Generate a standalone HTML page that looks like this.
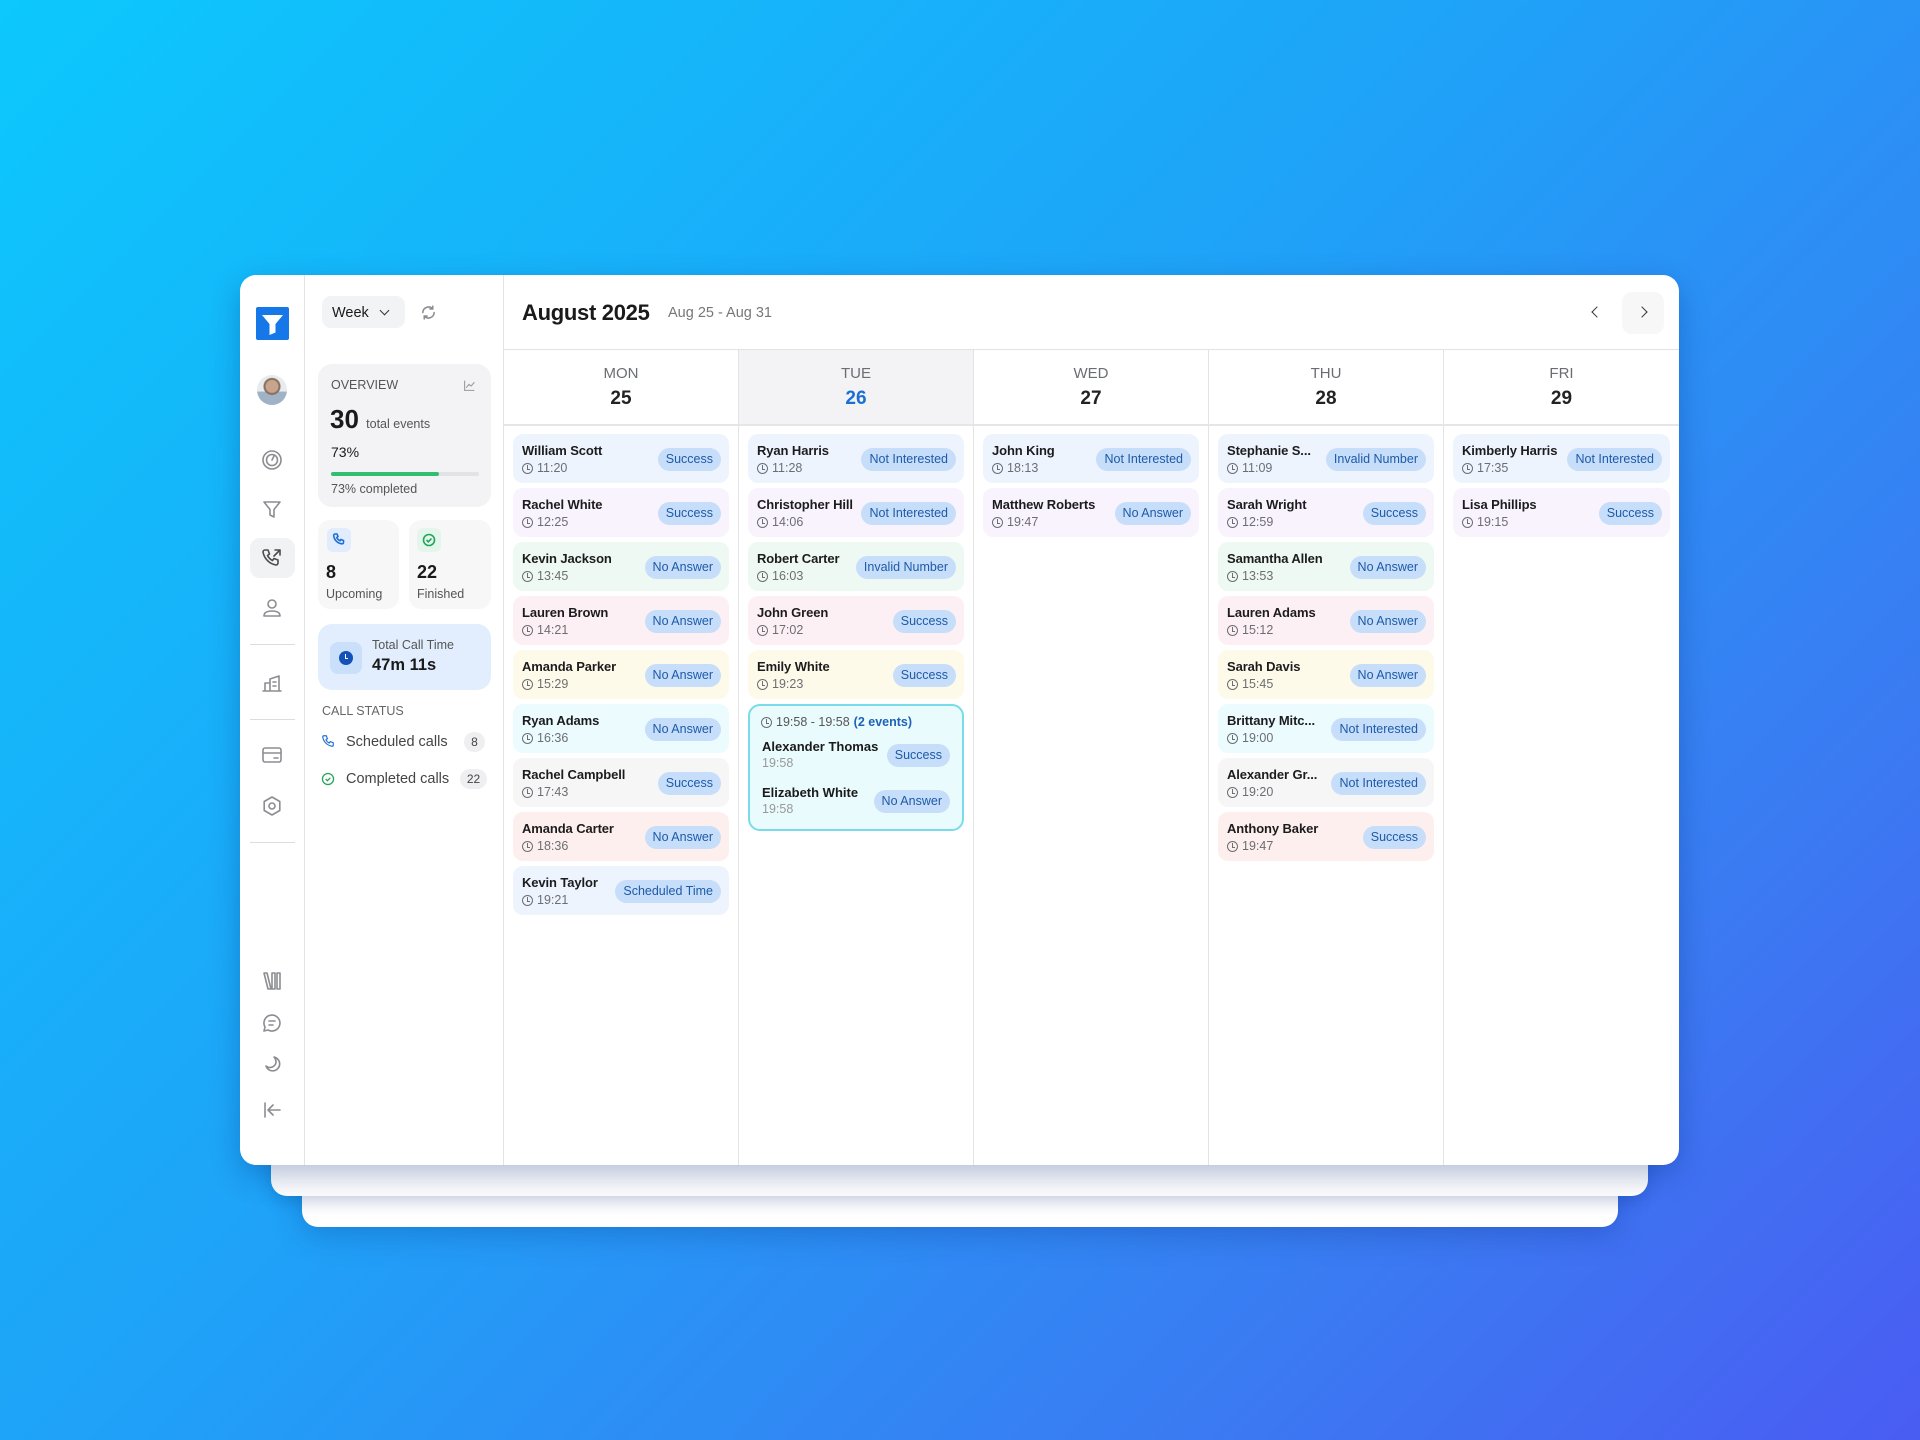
<!DOCTYPE html>
<html><head><meta charset="utf-8"><style>
*{box-sizing:border-box;margin:0;padding:0}
body{width:1920px;height:1440px;overflow:hidden;font-family:"Liberation Sans",sans-serif;background:linear-gradient(135deg,#0cc8fc 0%,#1fa2f8 45%,#3c78f2 80%,#4a5cf3 100%);position:relative;color:#1a1a1a}
.l3{position:absolute;left:302px;top:1150px;width:1316px;height:77px;background:#fff;border-radius:16px;box-shadow:0 8px 30px rgba(0,40,120,.25)}
.l2{position:absolute;left:271px;top:1130px;width:1377px;height:66px;background:#fff;border-radius:16px;box-shadow:0 6px 16px rgba(0,40,120,.2)}
.main{position:absolute;left:240px;top:275px;width:1439px;height:890px;background:#fff;border-radius:16px;box-shadow:0 10px 30px rgba(0,40,120,.3);overflow:hidden}
.a{position:absolute}
.rail{left:0;top:0;width:65px;height:890px;border-right:1px solid #e3e3e6}
.ic{position:absolute;left:20px;width:24px;height:24px}
.ic svg{width:24px;height:24px;fill:none;stroke:#8b8d93;stroke-width:1.6;stroke-linecap:round;stroke-linejoin:round}
.div{position:absolute;left:10px;width:45px;height:1px;background:#dcdde0}
.panel{left:65px;top:0;width:199px;height:890px;border-right:1px solid #e3e3e6}
.hdr{left:264px;top:0;width:1175px;height:75px;border-bottom:1px solid #e3e3e6}
.col{position:absolute;top:75px;width:235px;height:815px;border-right:1px solid #e3e3e6}
.dh{height:76px;border-bottom:2px solid #e6e6e9;text-align:center}
.dh .d{padding-top:15px;font-size:15px;color:#6b6d72}
.dh .n{margin-top:6px;font-size:19px;font-weight:bold;color:#222}
.cards{padding:8px 9px 0 9px}
.c{height:49px;margin-bottom:5px;border-radius:10px;position:relative;padding:9px 0 0 9px}
.c .nm{font-size:13px;font-weight:bold;color:#1c1c1e;white-space:nowrap;letter-spacing:-.1px}
.c .t{font-size:12.5px;color:#6c6e73;margin-top:3px;display:flex;align-items:center;gap:4px}
.clk{width:11px;height:11px;border:1.3px solid #6c6e73;border-radius:50%;position:relative;display:inline-block}
.clk:after{content:"";position:absolute;left:4px;top:1.5px;width:2px;height:3.5px;border-left:1.2px solid #6c6e73;border-bottom:1.2px solid #6c6e73}
.b{position:absolute;right:8px;top:14px;height:23px;line-height:23px;padding:0 8px;border-radius:12px;background:#c6defa;color:#1e5aa8;font-size:12.5px}
.bl{background:#eef4fe}.pu{background:#f8f3fd}.gr{background:#edf9f2}.pk{background:#fdf0f5}.ye{background:#fefae9}.cy{background:#ebfbfe}.gy{background:#f6f6f7}.rd{background:#fdefee}
</style></head><body>
<div class="l3"></div><div class="l2"></div>
<div class="main">
 <div class="a rail">
  <div class="a" style="left:16px;top:32px;width:33px;height:33px;background:#1677e8;border-radius:2px"><svg width="33" height="33" viewBox="0 0 33 33"><path d="M6 8h21l-7.5 9v8.5l-6 2.5v-11z" fill="#fff"/></svg></div>
  <div class="a" style="left:17px;top:100px;width:30px;height:30px;border-radius:50%;background:radial-gradient(circle at 50% 38%,#c9a48c 0 6px,#8a6d5d 7px 8px,transparent 9px),linear-gradient(#e8ecef 55%,#9fb2c6 56%)"></div>
  <div class="ic" style="top:173px"><svg viewBox="0 0 24 24"><circle cx="12" cy="12" r="9"/><circle cx="12" cy="12" r="5.5"/><path d="M12 12l2-4"/></svg></div>
  <div class="ic" style="top:222px"><svg viewBox="0 0 24 24"><path d="M4 5h16l-6 7.5V20l-4-2v-5.5z"/></svg></div>
  <div class="a" style="left:10px;top:263px;width:45px;height:40px;background:#f1f2f4;border-radius:10px"></div>
  <div class="ic" style="top:271px"><svg viewBox="0 0 24 24" style="stroke:#4a4c52"><path d="M5 4h3l1.5 4-2 1.5a11 11 0 0 0 5 5l1.5-2 4 1.5v3a2 2 0 0 1-2 2A16 16 0 0 1 3 6a2 2 0 0 1 2-2z"/><path d="M14 10l6-6M15 4h5v5"/></svg></div>
  <div class="ic" style="top:321px"><svg viewBox="0 0 24 24"><circle cx="12" cy="8" r="4"/><path d="M4 20c0-4 4-5 8-5s8 1 8 5z"/></svg></div>
  <div class="div" style="top:369px"></div>
  <div class="ic" style="top:396px"><svg viewBox="0 0 24 24"><path d="M3 20h18M5 20v-8h5v8M10 20V8l9-3v15M13 11h3M13 15h3"/></svg></div>
  <div class="div" style="top:444px"></div>
  <div class="ic" style="top:468px"><svg viewBox="0 0 24 24"><rect x="3" y="5" width="18" height="14" rx="2"/><path d="M3 10h18M14 15h4"/></svg></div>
  <div class="ic" style="top:519px"><svg viewBox="0 0 24 24"><circle cx="12" cy="12" r="3"/><path d="M12 3l7.8 4.5v9L12 21l-7.8-4.5v-9z"/></svg></div>
  <div class="div" style="top:567px"></div>
  <div class="ic" style="top:694px"><svg viewBox="0 0 24 24"><path d="M4 4l4 16h3L7 4zM12 4v16h3V4zM17 4v16h3V4z"/></svg></div>
  <div class="ic" style="top:736px"><svg viewBox="0 0 24 24"><path d="M4 20l1-4a8 8 0 1 1 3 3z"/><path d="M9 10h6M9 14h4"/></svg></div>
  <div class="ic" style="top:777px"><svg viewBox="0 0 24 24"><path d="M14 5a7 7 0 1 1-8 9 6 6 0 0 0 8-9z"/></svg></div>
  <div class="ic" style="top:823px"><svg viewBox="0 0 24 24"><path d="M5 5v14M20 12H9M13 7l-5 5 5 5"/></svg></div>
 </div>
 <div class="a panel">
  <div class="a" style="left:17px;top:21px;width:83px;height:32px;background:#f2f3f5;border-radius:9px;font-size:14.5px;padding:9px 0 0 10px">Week <span style="display:inline-block;width:7px;height:7px;border-right:1.5px solid #333;border-bottom:1.5px solid #333;transform:rotate(45deg);margin:0 0 3px 8px"></span></div>
  <svg class="a" style="left:115px;top:29px" width="17" height="17" viewBox="0 0 24 24" fill="none" stroke="#8b8d93" stroke-width="2.2" stroke-linecap="round"><path d="M20 12a8 8 0 0 1-14 5M4 12a8 8 0 0 1 14-5M18 3v4h-4M6 21v-4h4"/></svg>
  <div class="a" style="left:13px;top:89px;width:173px;height:143px;background:#f3f3f5;border-radius:14px">
   <div class="a" style="left:13px;top:14px;font-size:12.5px;color:#555">OVERVIEW</div>
   <svg class="a" style="left:145px;top:15px" width="13" height="13" viewBox="0 0 24 24" fill="none" stroke="#999" stroke-width="2"><path d="M3 3v18h18M6 16l5-6 4 3 6-7"/></svg>
   <div class="a" style="left:12px;top:40px;font-size:26px;font-weight:bold">30 <span style="font-size:12.5px;font-weight:normal;color:#555">total events</span></div>
   <div class="a" style="left:13px;top:80px;font-size:14px">73%</div>
   <div class="a" style="left:13px;top:108px;width:148px;height:4px;background:#e3e3e6;border-radius:2px"><div style="width:73%;height:4px;background:#2fbf6f;border-radius:2px"></div></div>
   <div class="a" style="left:13px;top:118px;font-size:12.5px;color:#555">73% completed</div>
  </div>
  <div class="a" style="left:13px;top:245px;width:81px;height:89px;background:#f7f7f8;border-radius:12px">
   <div class="a" style="left:9px;top:8px;width:24px;height:24px;background:#e1edfd;border-radius:6px"><svg width="24" height="24" viewBox="0 0 24 24" fill="none" stroke="#1e6fd9" stroke-width="1.6"><path d="M8 6h2l1 2.5-1.3 1a7 7 0 0 0 3.3 3.3l1-1.3 2.5 1v2a1.3 1.3 0 0 1-1.3 1.3A9 9 0 0 1 6.7 7.3 1.3 1.3 0 0 1 8 6z"/></svg></div>
   <div class="a" style="left:8px;top:42px;font-size:18px;font-weight:bold">8</div>
   <div class="a" style="left:8px;top:67px;font-size:12.5px;color:#555">Upcoming</div>
  </div>
  <div class="a" style="left:104px;top:245px;width:82px;height:89px;background:#f7f7f8;border-radius:12px">
   <div class="a" style="left:8px;top:8px;width:24px;height:24px;background:#e4f6ec;border-radius:6px"><svg width="24" height="24" viewBox="0 0 24 24" fill="none" stroke="#22a55a" stroke-width="1.6"><circle cx="12" cy="12" r="5.5"/><path d="M9.5 12l1.8 1.8 3.2-3.3"/></svg></div>
   <div class="a" style="left:8px;top:42px;font-size:18px;font-weight:bold">22</div>
   <div class="a" style="left:8px;top:67px;font-size:12.5px;color:#555">Finished</div>
  </div>
  <div class="a" style="left:13px;top:349px;width:173px;height:66px;background:#e2eefd;border-radius:14px">
   <div class="a" style="left:12px;top:18px;width:32px;height:32px;background:#c9dffa;border-radius:8px"><div style="margin:9px;width:14px;height:14px;border-radius:50%;background:#1552b8;position:relative"><div style="position:absolute;left:6px;top:3px;width:3px;height:5px;border-left:1.5px solid #fff;border-bottom:1.5px solid #fff"></div></div></div>
   <div class="a" style="left:54px;top:14px;font-size:12.5px;color:#555">Total Call Time</div>
   <div class="a" style="left:54px;top:32px;font-size:16.5px;font-weight:bold">47m 11s</div>
  </div>
  <div class="a" style="left:17px;top:429px;font-size:12.5px;color:#666">CALL STATUS</div>
  <svg class="a" style="left:16px;top:459px" width="14" height="14" viewBox="0 0 24 24" fill="none" stroke="#1e6fd9" stroke-width="2"><path d="M5 3h4l2 5-2.5 2a12 12 0 0 0 5.5 5.5l2-2.5 5 2v4a2 2 0 0 1-2 2A19 19 0 0 1 3 5a2 2 0 0 1 2-2z"/></svg>
  <div class="a" style="left:41px;top:459px;font-size:14.5px;color:#444">Scheduled calls</div>
  <div class="a" style="left:159px;top:457px;width:21px;height:20px;border-radius:10px;background:#efeff1;font-size:12px;text-align:center;line-height:20px;color:#444">8</div>
  <svg class="a" style="left:16px;top:497px" width="14" height="14" viewBox="0 0 24 24" fill="none" stroke="#22a55a" stroke-width="2.2"><circle cx="12" cy="12" r="9.5"/><path d="M8 12l3 3 5-5"/></svg>
  <div class="a" style="left:41px;top:496px;font-size:14.5px;color:#444">Completed calls</div>
  <div class="a" style="left:155px;top:494px;width:27px;height:20px;border-radius:10px;background:#efeff1;font-size:12px;text-align:center;line-height:20px;color:#444">22</div>
 </div>
 <div class="a hdr">
  <div class="a" style="left:18px;top:25px;font-size:22px;font-weight:bold;letter-spacing:-.3px">August 2025</div>
  <div class="a" style="left:164px;top:30px;font-size:14.5px;color:#777">Aug 25 - Aug 31</div>
  <div class="a" style="left:1089px;top:33px;width:8px;height:8px;border-left:1.8px solid #333;border-bottom:1.8px solid #333;transform:rotate(45deg)"></div>
  <div class="a" style="left:1118px;top:17px;width:42px;height:42px;background:#f7f7f8;border-radius:10px"></div>
  <div class="a" style="left:1134px;top:33px;width:8px;height:8px;border-right:1.8px solid #333;border-top:1.8px solid #333;transform:rotate(45deg)"></div>
 </div>

 <div class="col" style="left:264px">
  <div class="dh"><div class="d">MON</div><div class="n">25</div></div>
  <div class="cards">
   <div class="c bl"><div class="nm">William Scott</div><div class="t"><i class="clk"></i>11:20</div><span class="b">Success</span></div>
   <div class="c pu"><div class="nm">Rachel White</div><div class="t"><i class="clk"></i>12:25</div><span class="b">Success</span></div>
   <div class="c gr"><div class="nm">Kevin Jackson</div><div class="t"><i class="clk"></i>13:45</div><span class="b">No Answer</span></div>
   <div class="c pk"><div class="nm">Lauren Brown</div><div class="t"><i class="clk"></i>14:21</div><span class="b">No Answer</span></div>
   <div class="c ye"><div class="nm">Amanda Parker</div><div class="t"><i class="clk"></i>15:29</div><span class="b">No Answer</span></div>
   <div class="c cy"><div class="nm">Ryan Adams</div><div class="t"><i class="clk"></i>16:36</div><span class="b">No Answer</span></div>
   <div class="c gy"><div class="nm">Rachel Campbell</div><div class="t"><i class="clk"></i>17:43</div><span class="b">Success</span></div>
   <div class="c rd"><div class="nm">Amanda Carter</div><div class="t"><i class="clk"></i>18:36</div><span class="b">No Answer</span></div>
   <div class="c bl"><div class="nm">Kevin Taylor</div><div class="t"><i class="clk"></i>19:21</div><span class="b">Scheduled Time</span></div>
  </div>
 </div>
 <div class="col" style="left:499px">
  <div class="dh" style="background:#f3f3f5"><div class="d">TUE</div><div class="n" style="color:#1a6fd3">26</div></div>
  <div class="cards">
   <div class="c bl"><div class="nm">Ryan Harris</div><div class="t"><i class="clk"></i>11:28</div><span class="b">Not Interested</span></div>
   <div class="c pu"><div class="nm">Christopher Hill</div><div class="t"><i class="clk"></i>14:06</div><span class="b">Not Interested</span></div>
   <div class="c gr"><div class="nm">Robert Carter</div><div class="t"><i class="clk"></i>16:03</div><span class="b">Invalid Number</span></div>
   <div class="c pk"><div class="nm">John Green</div><div class="t"><i class="clk"></i>17:02</div><span class="b">Success</span></div>
   <div class="c ye"><div class="nm">Emily White</div><div class="t"><i class="clk"></i>19:23</div><span class="b">Success</span></div>
   <div style="height:127px;border:2px solid #79dbe9;background:#eafbfe;border-radius:12px;position:relative">
    <div class="a" style="left:11px;top:9px;font-size:12.5px;color:#555;display:flex;align-items:center;gap:4px"><i class="clk"></i>19:58 - 19:58 <span style="color:#1e62b8;font-weight:bold">(2 events)</span></div>
    <div class="a" style="left:12px;top:33px;font-size:13px;font-weight:bold">Alexander Thomas</div>
    <div class="a" style="left:12px;top:50px;font-size:12.5px;color:#999">19:58</div>
    <span class="b" style="top:38px;right:12px">Success</span>
    <div class="a" style="left:12px;top:79px;font-size:13px;font-weight:bold">Elizabeth White</div>
    <div class="a" style="left:12px;top:96px;font-size:12.5px;color:#999">19:58</div>
    <span class="b" style="top:84px;right:12px">No Answer</span>
   </div>
  </div>
 </div>
 <div class="col" style="left:734px">
  <div class="dh"><div class="d">WED</div><div class="n">27</div></div>
  <div class="cards">
   <div class="c bl"><div class="nm">John King</div><div class="t"><i class="clk"></i>18:13</div><span class="b">Not Interested</span></div>
   <div class="c pu"><div class="nm">Matthew Roberts</div><div class="t"><i class="clk"></i>19:47</div><span class="b">No Answer</span></div>
  </div>
 </div>
 <div class="col" style="left:969px">
  <div class="dh"><div class="d">THU</div><div class="n">28</div></div>
  <div class="cards">
   <div class="c bl"><div class="nm">Stephanie S...</div><div class="t"><i class="clk"></i>11:09</div><span class="b">Invalid Number</span></div>
   <div class="c pu"><div class="nm">Sarah Wright</div><div class="t"><i class="clk"></i>12:59</div><span class="b">Success</span></div>
   <div class="c gr"><div class="nm">Samantha Allen</div><div class="t"><i class="clk"></i>13:53</div><span class="b">No Answer</span></div>
   <div class="c pk"><div class="nm">Lauren Adams</div><div class="t"><i class="clk"></i>15:12</div><span class="b">No Answer</span></div>
   <div class="c ye"><div class="nm">Sarah Davis</div><div class="t"><i class="clk"></i>15:45</div><span class="b">No Answer</span></div>
   <div class="c cy"><div class="nm">Brittany Mitc...</div><div class="t"><i class="clk"></i>19:00</div><span class="b">Not Interested</span></div>
   <div class="c gy"><div class="nm">Alexander Gr...</div><div class="t"><i class="clk"></i>19:20</div><span class="b">Not Interested</span></div>
   <div class="c rd"><div class="nm">Anthony Baker</div><div class="t"><i class="clk"></i>19:47</div><span class="b">Success</span></div>
  </div>
 </div>
 <div class="col" style="left:1204px;width:235px;border-right:none">
  <div class="dh"><div class="d">FRI</div><div class="n">29</div></div>
  <div class="cards">
   <div class="c bl"><div class="nm">Kimberly Harris</div><div class="t"><i class="clk"></i>17:35</div><span class="b">Not Interested</span></div>
   <div class="c pu"><div class="nm">Lisa Phillips</div><div class="t"><i class="clk"></i>19:15</div><span class="b">Success</span></div>
  </div>
 </div>
</div>
</body></html>
